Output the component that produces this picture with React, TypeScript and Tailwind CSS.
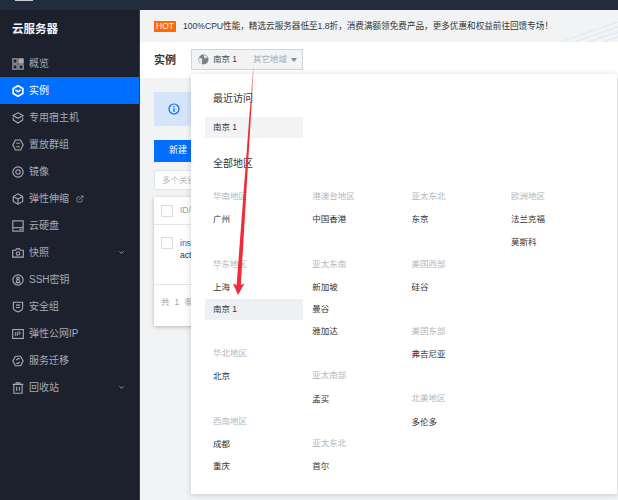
import { ChevronDown, ExternalLink } from 'lucide-react';
import type { ReactNode } from 'react';

const font = 'font-["Liberation_Sans","Noto_Sans_CJK_SC",sans-serif]';

function Ico({ children }: { children: ReactNode }) {
  return (
    <svg viewBox="0 0 14 14" fill="none" stroke="currentColor" strokeWidth="1.3" className="w-[12px] h-[12px] shrink-0">
      {children}
    </svg>
  );
}

const menu: { label: string; icon: ReactNode; active?: boolean; ext?: boolean; chevron?: boolean }[] = [
  {
    label: '概览',
    icon: (
      <Ico>
        <rect x="1" y="1" width="5" height="5" />
        <rect x="8" y="1" width="5" height="5" fill="currentColor" />
        <rect x="1" y="8" width="5" height="5" />
        <rect x="8" y="8" width="5" height="5" />
      </Ico>
    ),
  },
  {
    label: '实例',
    active: true,
    icon: (
      <Ico>
        <path d="M7 .8 12.6 4v6L7 13.2 1.4 10V4z" strokeWidth="2" />
        <path d="M4 5.6 7 8l3-2.4" strokeWidth="1.7" />
      </Ico>
    ),
  },
  {
    label: '专用宿主机',
    icon: (
      <Ico>
        <path d="M7 1 12.8 4.2 7 7.4 1.2 4.2z" />
        <path d="M1.5 6.5v2.8L7 12.8l5.5-3.5V6.5" />
      </Ico>
    ),
  },
  {
    label: '置放群组',
    icon: (
      <Ico>
        <path d="M4 1.2h6L13 7l-3 5.8H4L1 7z" />
        <path d="M5 5h4M5 9h4" />
      </Ico>
    ),
  },
  {
    label: '镜像',
    icon: (
      <Ico>
        <circle cx="7" cy="7" r="6" />
        <circle cx="7" cy="7" r="2.6" />
      </Ico>
    ),
  },
  {
    label: '弹性伸缩',
    ext: true,
    icon: (
      <Ico>
        <path d="M7 1 12.5 4.1v5.8L7 13 1.5 9.9V4.1z" />
        <path d="M7 7v6M7 7 1.5 4.1M7 7l5.5-2.9" />
      </Ico>
    ),
  },
  {
    label: '云硬盘',
    icon: (
      <Ico>
        <rect x="1" y="1" width="12" height="12" />
        <path d="M1 9h12" />
        <path d="M9 11h2" />
      </Ico>
    ),
  },
  {
    label: '快照',
    chevron: true,
    icon: (
      <Ico>
        <path d="M.8 3.8h3.4l1-1.6h3.6l1 1.6h3.4v8H.8z" />
        <circle cx="7" cy="7.6" r="2" />
      </Ico>
    ),
  },
  {
    label: 'SSH密钥',
    icon: (
      <Ico>
        <circle cx="7" cy="7" r="6" />
        <circle cx="7" cy="5" r="1.5" />
        <path d="M6.2 6.3 4.8 10h4.4L7.8 6.3" />
      </Ico>
    ),
  },
  {
    label: '安全组',
    icon: (
      <Ico>
        <path d="M1.6 1.4h10.8v6.8c0 2.2-2.8 3.6-5.4 4.6-2.6-1-5.4-2.4-5.4-4.6z" />
        <path d="M4.6 4.8h4.8M4.6 7.6h4.8" />
      </Ico>
    ),
  },
  {
    label: '弹性公网IP',
    icon: (
      <Ico>
        <rect x=".8" y="1.8" width="12.4" height="10.4" />
        <path d="M4 4.8v4.4M6 9.2V4.8h3.4v2.4H6" strokeWidth="1" />
      </Ico>
    ),
  },
  {
    label: '服务迁移',
    icon: (
      <Ico>
        <path d="M4 1.4h6L13 7l-3 5.6H4L1 7z" />
        <path d="M5 5.8 7 4.2h2M9 8.2 7 9.8H5" />
      </Ico>
    ),
  },
  {
    label: '回收站',
    chevron: true,
    icon: (
      <Ico>
        <path d="M.8 2.8h12.4M4 1h6M2.2 2.8v10.4h9.6V2.8" />
        <path d="M5.4 5.5v4.8M8.6 5.5v4.8" />
      </Ico>
    ),
  },
];

const columns = [
  [
    { title: '华南地区', items: ['广州'] },
    { title: '华东地区', items: ['上海', '南京 1'] },
    { title: '华北地区', items: ['北京'] },
    { title: '西南地区', items: ['成都', '重庆'] },
  ],
  [
    { title: '港澳台地区', items: ['中国香港'] },
    { title: '亚太东南', items: ['新加坡', '曼谷', '雅加达'] },
    { title: '亚太南部', items: ['孟买'] },
    { title: '亚太东北', items: ['首尔'] },
  ],
  [
    { title: '亚太东北', items: ['东京'] },
    { title: '美国西部', items: ['硅谷'] },
    { title: '美国东部', items: ['弗吉尼亚'] },
    { title: '北美地区', items: ['多伦多'] },
  ],
  [{ title: '欧洲地区', items: ['法兰克福', '莫斯科'] }],
];

function Sidebar() {
  return (
    <aside className="w-[140px] shrink-0 bg-[#1c212d] border-r border-[#3a3f4a] flex flex-col">
      <div className="h-[40px] pl-[12px] pt-[12px] text-[11.5px] leading-[14px] font-bold text-[#f2f4f7]">云服务器</div>
      <nav>
        {menu.map((m) => (
          <div
            key={m.label}
            className={`h-[27px] pl-[12px] flex items-center gap-[5px] text-[10px] ${
              m.active ? 'bg-[#006eff] text-white' : 'text-[#a6abb5]'
            }`}
          >
            {m.icon}
            <span>{m.label}</span>
            {m.ext && <ExternalLink className="w-[8px] h-[8px] ml-[2px]" strokeWidth={2} />}
            {m.chevron && <ChevronDown className="w-[7px] h-[7px] ml-auto mr-[14px]" strokeWidth={3} />}
          </div>
        ))}
      </nav>
    </aside>
  );
}

function Backdrop() {
  return (
    <div className="flex-1 px-[14px] pt-[14px]">
      <div className="h-[34px] bg-[#d5e4fb] pl-[14px] flex items-center text-[#006eff]">
        <svg viewBox="0 0 12 12" fill="none" stroke="currentColor" className="w-[12px] h-[12px]">
          <circle cx="6" cy="6" r="5" strokeWidth="1.2" />
          <path d="M6 5.2V9M6 3v1.2" strokeWidth="1.3" />
        </svg>
      </div>
      <div className="mt-[14px] w-[60px] h-[22px] bg-[#006eff] text-white text-[9px] pl-[15px] flex items-center">新建</div>
      <div className="mt-[8px] h-[20px] bg-white border border-[#dfe3ea] pl-[7px] flex items-center text-[8.5px] text-[#b8bcc4]">多个关键字用竖线分隔</div>
      <div className="mt-[7px] bg-white shadow-[0_1px_4px_rgba(0,0,0,0.25)]">
        <div className="h-[28px] border-b border-[#e3e5e9] pl-[7px] flex items-center gap-[7px] text-[8.5px] text-[#9a9ea6]">
          <span className="w-[12px] h-[12px] border border-[#d8dde5]" />
          ID/名称
        </div>
        <div className="h-[60px] border-b border-[#e3e5e9] pl-[7px] pt-[12px] flex gap-[7px] text-[8.5px]">
          <span className="w-[12px] h-[12px] border border-[#d8dde5]" />
          <div className="leading-[12px]">
            <div className="text-[#006eff]">ins-8ka1x</div>
            <div className="text-[#333]">active</div>
          </div>
        </div>
        <div className="h-[41px] pl-[7px] pt-[11px] flex gap-[5px] text-[8.5px] text-[#a0a4ab]">
          <span>共</span>
          <span>1</span>
          <span>条</span>
        </div>
      </div>
    </div>
  );
}

function RegionDropdown() {
  return (
    <div className="absolute left-[51px] top-[64px] w-[426px] h-[420px] bg-white shadow-[0_1px_6px_rgba(0,0,0,0.18)] pl-[14px] pt-[14px] text-[#333]">
      <div className="h-[21px] pl-[8px] flex items-center text-[10px]">最近访问</div>
      <div className="mt-[8px] w-[98px] h-[21px] pl-[8px] bg-[#f2f3f5] flex items-center text-[8.5px]">南京 1</div>
      <div className="mt-[15px] h-[21px] pl-[8px] flex items-center text-[10px]">全部地区</div>
      <div className="mt-[11px] flex">
        {columns.map((col, i) => (
          <div key={i} className="w-[99.3px] flex flex-col gap-[21px]">
            {col.map((g) => (
              <div key={g.title}>
                <div className="h-[23.2px] pl-[8px] flex items-center text-[8.5px] text-[#b4b7bd]">{g.title}</div>
                {g.items.map((it) => (
                  <div
                    key={it}
                    className={`h-[21.2px] my-px w-[98px] pl-[8px] flex items-center text-[8.5px] ${
                      i === 0 && it === '南京 1' ? 'bg-[#eef0f4]' : ''
                    }`}
                  >
                    {it}
                  </div>
                ))}
              </div>
            ))}
          </div>
        ))}
      </div>
    </div>
  );
}

export default function App() {
  return (
    <div className={`relative w-[618px] h-[500px] overflow-hidden flex flex-col bg-[#f2f3f5] ${font}`}>
      <div className="h-[10px] shrink-0 bg-[#232c3d]">
        <div className="ml-[15px] w-[18px] h-px bg-[#c9ccd1]" />
      </div>
      <div className="flex-1 flex min-h-0">
        <Sidebar />
        <main className="relative flex-1 flex flex-col min-w-0">
          <div className="relative h-[32px] shrink-0 bg-[#f2f3f5] pl-[14px] flex items-center gap-[7px] overflow-hidden">
            <span className="h-[11px] px-[2px] bg-[#ff6a00] text-white text-[8.5px] leading-[11px]">HOT</span>
            <span className="text-[8.6px] text-[#333] whitespace-nowrap">
              100%CPU性能，精选云服务器低至1.8折，消费满额领免费产品，更多优惠和权益前往回馈专场！
            </span>
            <svg viewBox="0 0 58 20" className="absolute right-0 bottom-0 w-[58px] h-[20px]" stroke="#d8e8f0" fill="none">
              <path d="M0 20 58 0M14 20 58 5M28 20 58 10M42 20 58 15" />
            </svg>
          </div>
          <div className="h-[36px] shrink-0 bg-white pl-[14px] flex items-center gap-[15px]">
            <span className="text-[11px] font-bold text-[#333]">实例</span>
            <div className="w-[112px] h-[21px] mb-px bg-[#f2f3f5] border border-[#cfd5de] pl-[6px] flex items-center text-[8.5px] text-[#444]">
              <svg viewBox="0 0 12 12" className="w-[11px] h-[11px] shrink-0">
                <circle cx="6" cy="6" r="5.5" fill="#7c7f85" />
                <path d="M1.2 4.5C2.5 4 4 4.5 4.5 5.5S4 7.5 4.5 9 4 11 3 10.5C1.5 9.5.7 6.5 1.2 4.5z" fill="#e8eaed" />
                <path d="M6.5 1.2c1.5.2 3 1.2 3.8 2.5L8 5 6.5 3.5z" fill="#e8eaed" />
              </svg>
              <span className="ml-[4px]">南京 1</span>
              <span className="ml-[16px] text-[#a5a9b0]">其它地域</span>
              <span className="ml-[4px] w-0 h-0 border-x-[3px] border-x-transparent border-t-[4px] border-t-[#888]" />
            </div>
          </div>
          <Backdrop />
          <RegionDropdown />
        </main>
      </div>
      <svg viewBox="0 0 618 500" className="absolute inset-0 w-[618px] h-[500px] pointer-events-none">
        <defs>
          <linearGradient id="arrowFade" x1="0" y1="68" x2="0" y2="110" gradientUnits="userSpaceOnUse">
            <stop offset="0" stopColor="#f43e48" stopOpacity="0.35" />
            <stop offset="1" stopColor="#f02c38" />
          </linearGradient>
        </defs>
        <path d="M253 68 253.8 68 240.8 285 244.5 283.5 238 295 233 283.5 236.6 285z" fill="url(#arrowFade)" />
      </svg>
    </div>
  );
}
